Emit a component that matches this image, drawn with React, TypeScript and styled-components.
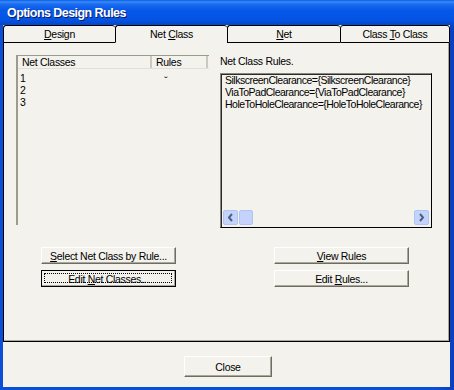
import React from "react";
import styled, { createGlobalStyle, css } from "styled-components";

const GlobalStyle = createGlobalStyle`
  html, body {
    margin: 0;
    padding: 0;
    background: #ffffff;
  }
  body {
    font-family: "Liberation Sans", Arial, sans-serif;
    font-size: 10.5px;
    letter-spacing: -0.3px;
    color: #000;
  }
`;

const Frame = styled.div`
  width: 454px;
  height: 390px;
  display: flex;
  flex-direction: column;
  background: linear-gradient(to right, #0a4fd8 0%, #0a4fd8 96%, #0a3fbf 100%);
  overflow: hidden;
`;

const TitleBar = styled.div`
  height: 25px;
  flex: none;
  display: flex;
  align-items: center;
  padding-left: 7px;
  background: linear-gradient(
    to bottom,
    #0a5ce6 0%,
    #3b8cf7 8%,
    #1a6cf0 16%,
    #0658e8 40%,
    #0454e4 80%,
    #0546c4 100%
  );
`;

const Title = styled.span`
  font-family: "Liberation Sans", Arial, sans-serif;
  font-weight: bold;
  font-size: 12.5px;
  letter-spacing: -0.55px;
  color: #ffffff;
  text-shadow: 1px 1px #0a1c6e;
`;

const Body = styled.div`
  flex: 1;
  margin: 0 4px 3px 3px;
  background: #f3f2ec;
  display: flex;
  flex-direction: column;
`;

const TabStrip = styled.div`
  display: flex;
  height: 18px;
  flex: none;
`;

const Tab = styled.div<{ $w: number; $active?: boolean }>`
  width: ${(p) => p.$w}px;
  box-sizing: border-box;
  border-top: 1px solid #000;
  border-left: 1px solid #000;
  border-radius: 3px 3px 0 0;
  display: flex;
  align-items: center;
  justify-content: center;
  ${(p) =>
    p.$active
      ? css`
          border-bottom: 1px solid transparent;
        `
      : css`
          border-bottom: 1px solid #000;
        `}
  &:last-child {
    border-right: 1px solid #000;
  }
`;

const Key = styled.span`
  text-decoration: underline;
`;

const Panel = styled.div`
  height: 299px;
  flex: none;
  box-sizing: border-box;
  border-left: 1px solid #000;
  border-right: 1px solid #000;
  border-bottom: 1px solid #000;
  box-shadow: inset -1px -1px #aca899;
  padding: 12px 17px 0 12px;
  display: flex;
  flex-direction: column;
`;

const TopRow = styled.div`
  display: flex;
  gap: 11px;
  align-items: flex-start;
`;

const ClassList = styled.div`
  width: 193px;
  height: 170px;
  box-sizing: border-box;
  border-top: 1px solid #9d9a8e;
  border-left: 2px solid #9d9a8e;
`;

const ListHeader = styled.div`
  display: grid;
  grid-template-columns: 134px 56px;
  height: 12px;
  border-bottom: 1px solid #e2e0d6;
`;

const HeadCell = styled.div`
  padding-left: 4px;
  line-height: 12px;
  border-right: 2px solid #cbc8bc;
`;

const ListRows = styled.div`
  padding-top: 3px;
`;

const ListRow = styled.div`
  display: grid;
  grid-template-columns: 138px 54px;
  height: 12px;
  line-height: 12px;
  padding-left: 2px;
`;

const Tick = styled.span`
  font-size: 11px;
  padding-left: 6px;
  line-height: 12px;
  position: relative;
  top: 3px;
`;

const RightCol = styled.div`
  width: 212px;
  display: flex;
  flex-direction: column;
`;

const Caption = styled.div`
  height: 18px;
  line-height: 12px;
`;

const RulesBox = styled.div`
  height: 155px;
  box-sizing: border-box;
  border-top: 1px solid #8a877c;
  border-left: 1px solid #8a877c;
  border-right: 1px solid #000;
  border-bottom: 1px solid #000;
  box-shadow: inset 1px 1px #2b2b2b;
  padding: 0 2px 2px 4px;
  display: flex;
  flex-direction: column;
`;

const RuleLines = styled.div`
  flex: 1;
  line-height: 12px;
  letter-spacing: -0.5px;
  white-space: nowrap;
  overflow: hidden;
`;

const HScroll = styled.div`
  height: 15px;
  display: flex;
  gap: 1px;
  margin-left: -2px;
`;

const ScrollBtn = styled.div<{ $w?: number }>`
  width: ${(p) => p.$w ?? 15}px;
  height: 15px;
  box-sizing: border-box;
  background: #c4d3fb;
  border: 1px solid #b1c4f1;
  border-radius: 2px;
  display: flex;
  align-items: center;
  justify-content: center;
`;

const Track = styled.div`
  flex: 1;
`;

const ButtonGrid = styled.div`
  display: grid;
  grid-template-columns: 193px 212px;
  column-gap: 11px;
  margin-top: 19px;
`;

const ButtonCol = styled.div<{ $indent: number }>`
  display: flex;
  flex-direction: column;
  gap: 6px;
  padding-left: ${(p) => p.$indent}px;
`;

const Button = styled.div<{ $w?: number; $h?: number; $focus?: boolean }>`
  width: ${(p) => p.$w ?? 135}px;
  height: ${(p) => p.$h ?? 17}px;
  box-sizing: border-box;
  background: #f3f2ec;
  border-top: 1px solid #ffffff;
  border-left: 1px solid #ffffff;
  border-right: 1px solid #6f6d63;
  border-bottom: 1px solid #6f6d63;
  box-shadow: inset -1px -1px #aca899;
  display: flex;
  align-items: center;
  justify-content: center;
  ${(p) =>
    p.$focus &&
    css`
      border: 1px solid #000;
      position: relative;
      &::after {
        content: "";
        position: absolute;
        left: 2px;
        top: 2px;
        right: 3px;
        bottom: 3px;
        border: 1px dotted #000;
      }
    `}
`;

const Footer = styled.div`
  flex: 1;
  display: flex;
  justify-content: center;
  padding: 14px 0 0 3px;
`;

const Arrow = ({ dir }: { dir: "left" | "right" }) => (
  <svg width="7" height="9" viewBox="0 0 7 9">
    <path
      d={dir === "left" ? "M5 1 L2 4.5 L5 8" : "M2 1 L5 4.5 L2 8"}
      fill="none"
      stroke="#4d6185"
      strokeWidth="2"
    />
  </svg>
);

const rules = [
  "SilkscreenClearance={SilkscreenClearance}",
  "ViaToPadClearance={ViaToPadClearance}",
  "HoleToHoleClearance={HoleToHoleClearance}",
];

const App: React.FC = () => {
  return (
    <>
      <GlobalStyle />
      <Frame>
        <TitleBar>
          <Title>Options Design Rules</Title>
        </TitleBar>
        <Body>
          <TabStrip>
            <Tab $w={112}>
              <span>
                <Key>D</Key>esign
              </span>
            </Tab>
            <Tab $w={112} $active>
              <span>
                Net <Key>C</Key>lass
              </span>
            </Tab>
            <Tab $w={113}>
              <span>
                <Key>N</Key>et
              </span>
            </Tab>
            <Tab $w={110}>
              <span>
                Class <Key>T</Key>o Class
              </span>
            </Tab>
          </TabStrip>
          <Panel>
            <TopRow>
              <ClassList>
                <ListHeader>
                  <HeadCell>Net Classes</HeadCell>
                  <HeadCell>Rules</HeadCell>
                </ListHeader>
                <ListRows>
                  {["1", "2", "3"].map((n, i) => (
                    <ListRow key={n}>
                      <span>{n}</span>
                      {i === 0 ? <Tick>ˇ</Tick> : <span />}
                    </ListRow>
                  ))}
                </ListRows>
              </ClassList>
              <RightCol>
                <Caption>Net Class Rules.</Caption>
                <RulesBox>
                  <RuleLines>
                    {rules.map((r) => (
                      <div key={r}>{r}</div>
                    ))}
                  </RuleLines>
                  <HScroll>
                    <ScrollBtn>
                      <Arrow dir="left" />
                    </ScrollBtn>
                    <ScrollBtn $w={14} />
                    <Track />
                    <ScrollBtn>
                      <Arrow dir="right" />
                    </ScrollBtn>
                  </HScroll>
                </RulesBox>
              </RightCol>
            </TopRow>
            <ButtonGrid>
              <ButtonCol $indent={25}>
                <Button>
                  <span>
                    <Key>S</Key>elect Net Class by Rule...
                  </span>
                </Button>
                <Button $focus>
                  <span>
                    Edit <Key>N</Key>et Classes...
                  </span>
                </Button>
              </ButtonCol>
              <ButtonCol $indent={54}>
                <Button>
                  <span>
                    <Key>V</Key>iew Rules
                  </span>
                </Button>
                <Button>
                  <span>
                    Edit <Key>R</Key>ules...
                  </span>
                </Button>
              </ButtonCol>
            </ButtonGrid>
          </Panel>
          <Footer>
            <Button $w={88} $h={21}>
              Close
            </Button>
          </Footer>
        </Body>
      </Frame>
    </>
  );
};

export default App;
